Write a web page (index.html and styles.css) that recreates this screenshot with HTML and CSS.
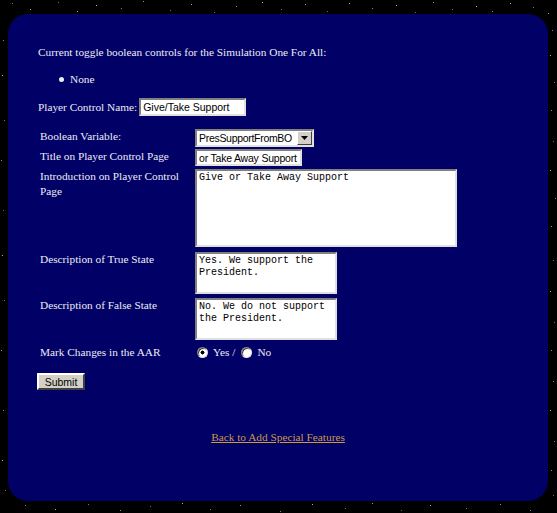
FILE: index.html
```html
<!DOCTYPE html>
<html>
<head>
<meta charset="utf-8">
<title>Player Controls</title>
<link rel="stylesheet" href="styles.css">
</head>
<body>
<div class="stars"></div>
<div class="panel">
  <p class="intro">Current toggle boolean controls for the Simulation One For All:</p>
  <ul class="list"><li>None</li></ul>
  <div class="name-row">
    <span>Player Control Name:</span>
    <input class="text name" type="text" value="Give/Take Support">
  </div>
  <div class="fields">
    <div class="label">Boolean Variable:</div>
    <div class="ctrl">
      <div class="select">
        <span class="select-value">PresSupportFromBO</span>
        <span class="select-btn"><svg width="7" height="4" viewBox="0 0 7 4"><path d="M0 0h7L3.5 4z" fill="#000"/></svg></span>
      </div>
    </div>
    <div class="label">Title on Player Control Page</div>
    <div class="ctrl"><input class="text title" type="text" value="or Take Away Support"></div>
    <div class="label">Introduction on Player Control Page</div>
    <div class="ctrl"><textarea class="area wide">Give or Take Away Support</textarea></div>
    <div class="label">Description of True State</div>
    <div class="ctrl"><textarea class="area small">Yes. We support the President.</textarea></div>
    <div class="label">Description of False State</div>
    <div class="ctrl"><textarea class="area small">No. We do not support the President.</textarea></div>
    <div class="label">Mark Changes in the AAR</div>
    <div class="ctrl radios">
      <input class="radio" type="radio" name="aar" checked><span class="opt">Yes /</span>
      <input class="radio" type="radio" name="aar"><span class="opt">No</span>
    </div>
  </div>
  <button class="submit" type="button">Submit</button>
  <div class="back"><a href="#">Back to Add Special Features</a></div>
</div>
</body>
</html>
```
FILE: styles.css
```css
html, body {
  margin: 0;
  background: #000;
}
body {
  padding: 14px 9px 12px 8px;
  font-family: "Liberation Serif", "Times New Roman", serif;
  font-size: 11.3px;
  color: #ececf4;
}
.stars {
  position: absolute;
  left: 0;
  top: 0;
  width: 1px;
  height: 1px;
  background: transparent;
  box-shadow:
    12px 3px #777, 30px 9px #aaa, 58px 2px #666, 77px 11px #999, 96px 5px #bbb,
    121px 8px #777, 143px 1px #999, 170px 10px #666, 191px 4px #aaa, 214px 12px #777,
    236px 6px #999, 262px 2px #bbb, 281px 9px #777, 305px 4px #999, 327px 11px #666,
    349px 3px #aaa, 372px 8px #888, 396px 5px #aaa, 415px 12px #666, 433px 2px #999,
    452px 9px #777, 476px 6px #bbb, 492px 11px #888, 510px 3px #aaa, 533px 7px #777,
    548px 13px #999, 552px 30px #888, 550px 55px #aaa, 554px 82px #777, 551px 110px #999,
    553px 141px #666, 550px 170px #aaa, 555px 198px #888, 551px 226px #999, 553px 260px #777,
    550px 291px #aaa, 554px 322px #666, 551px 350px #999, 553px 381px #888, 550px 410px #aaa,
    554px 441px #777, 551px 470px #999, 553px 495px #666,
    25px 505px #888, 55px 509px #aaa, 88px 504px #777, 120px 510px #999, 150px 506px #666,
    182px 503px #aaa, 210px 509px #777, 240px 505px #999, 280px 511px #888, 312px 504px #aaa,
    345px 508px #777, 372px 503px #999, 401px 510px #666, 430px 505px #aaa, 466px 508px #777,
    500px 504px #999, 530px 510px #888,
    3px 40px #888, 2px 75px #aaa, 4px 120px #777, 1px 160px #999, 3px 210px #666,
    2px 255px #aaa, 4px 300px #777, 1px 350px #999, 3px 410px #888, 2px 460px #aaa, 5px 490px #777;
}
.panel {
  position: relative;
  box-sizing: border-box;
  width: 540px;
  height: 487px;
  background: #000066;
  border-radius: 20px;
  padding: 31px 0 0 30px;
  display: flex;
  flex-direction: column;
  align-items: flex-start;
}
.intro {
  margin: 0;
  line-height: 15px;
}
.list {
  list-style: none;
  margin: 12px 0 0 0;
  padding: 0 0 0 21px;
  line-height: 15px;
}
.list li {
  display: flex;
  align-items: center;
}
.list li::before {
  content: "";
  width: 5px;
  height: 5px;
  background: #ececf4;
  border-radius: 50%;
  margin-right: 6px;
}
.name-row {
  display: flex;
  align-items: center;
  margin-top: 11px;
  gap: 2px;
  height: 18px;
}
.text {
  box-sizing: border-box;
  height: 18px;
  margin: 0;
  padding: 0 2px;
  background: #fff;
  border: 2px solid;
  border-color: #808080 #e0e0e0 #e0e0e0 #808080;
  font-family: "Liberation Sans", Arial, sans-serif;
  font-size: 10.5px;
  color: #000;
  outline: none;
}
.name { width: 107px; }
.title {
  width: 107px;
  height: 17px;
  padding: 0 0 0 2px;
  letter-spacing: -0.2px;
}
.fields {
  display: grid;
  grid-template-columns: 155px auto;
  grid-template-rows: 20px 20px 83px 46px 47px 20px;
  margin: 13px 0 0 2px;
  line-height: 15px;
}
.ctrl {
  display: flex;
  align-items: flex-start;
}
.select {
  box-sizing: border-box;
  width: 119px;
  height: 18px;
  background: #fff;
  border: 2px solid;
  border-color: #808080 #e0e0e0 #e0e0e0 #808080;
  display: flex;
  align-items: stretch;
  font-family: "Liberation Sans", Arial, sans-serif;
  font-size: 10.5px;
  color: #000;
}
.select-value {
  flex: 1;
  padding-left: 2px;
  line-height: 14px;
  white-space: nowrap;
  overflow: hidden;
  letter-spacing: -0.3px;
}
.select-btn {
  box-sizing: border-box;
  width: 15px;
  background: #d4d0c8;
  border: 1px solid;
  border-color: #fff #404040 #404040 #fff;
  display: flex;
  align-items: center;
  justify-content: center;
}
.area {
  box-sizing: border-box;
  margin: 0;
  padding: 1px 2px;
  background: #fff;
  border: 2px solid;
  border-color: #808080 #e0e0e0 #e0e0e0 #808080;
  font-family: "Liberation Mono", "Courier New", monospace;
  font-size: 10px;
  line-height: 12px;
  color: #000;
  resize: none;
  overflow: hidden;
  outline: none;
}
.wide { width: 262px; height: 78px; }
.small { width: 142px; height: 42px; }
.radios {
  align-items: center;
  height: 15px;
  padding-left: 2px;
}
.radio {
  appearance: none;
  -webkit-appearance: none;
  box-sizing: border-box;
  width: 11px;
  height: 11px;
  margin: 0 5px 0 0;
  border-radius: 50%;
  border: 1px solid;
  border-color: #808080 #e8e8e8 #e8e8e8 #808080;
  background: #fff;
  box-shadow: inset 1px 1px 0 #404040;
}
.radio:checked {
  background: radial-gradient(circle, #000 0 1.8px, #fff 2.2px);
}
.opt {
  margin-right: 6px;
}
.submit {
  box-sizing: border-box;
  margin: 8px 0 0 -1px;
  width: 48px;
  height: 17px;
  padding: 0;
  background: #d4d0c8;
  border: 2px solid;
  border-color: #fff #404040 #404040 #fff;
  font-family: "Liberation Sans", Arial, sans-serif;
  font-size: 10.5px;
  color: #000;
}
.back {
  align-self: stretch;
  margin: 40px 30px 0 0;
  text-align: center;
  line-height: 15px;
}
.back a {
  color: #cc9944;
  text-decoration: underline;
}
```
